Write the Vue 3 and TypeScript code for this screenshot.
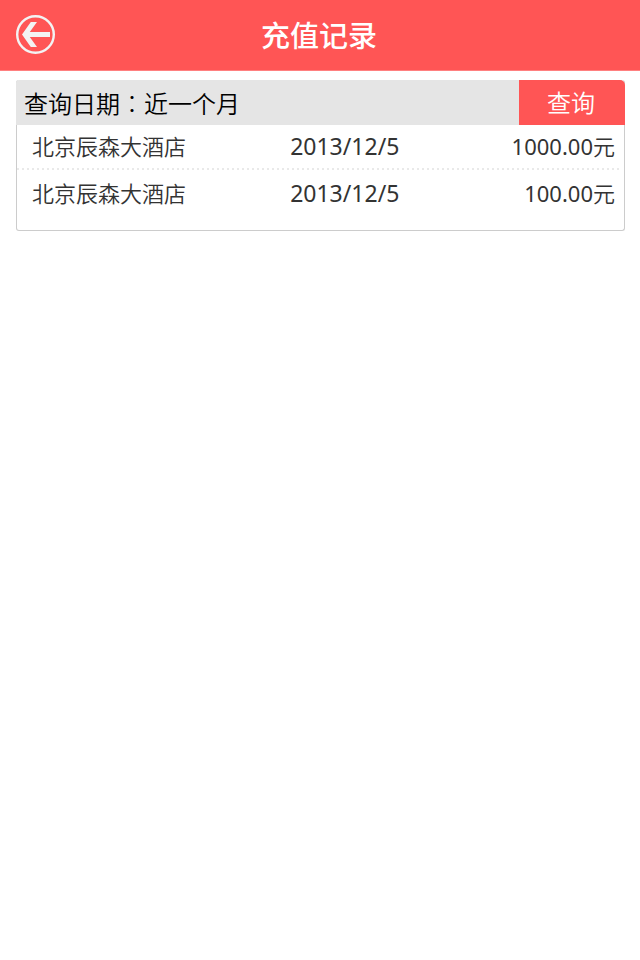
<script setup lang="ts">
import { ref } from 'vue'

interface RechargeRecord {
  id: number
  merchant: string
  date: string
  amount: string
}

const ranges: string[] = ['近一个月']
const range = ref<string>(ranges[0])

const records = ref<RechargeRecord[]>([
  { id: 1, merchant: '北京辰森大酒店', date: '2013/12/5', amount: '1000.00' },
  { id: 2, merchant: '北京辰森大酒店', date: '2013/12/5', amount: '100.00' },
])
</script>

<template>
  <div class="page">
    <header class="bar">
      <button class="back" type="button" aria-label="返回">
        <svg viewBox="0 0 39 39" aria-hidden="true">
          <circle cx="19.5" cy="19.5" r="18.3" fill="none" stroke="currentColor" stroke-width="2.4" />
          <path d="M6 19.5 14.8 7H21L13.8 17H34V22H13.8L21 32H14.8Z" fill="currentColor" />
        </svg>
      </button>
      <h1 class="title">充值记录</h1>
    </header>

    <main class="card">
      <form class="query" @submit.prevent>
        <label class="label" for="range">查询日期<span class="colon">：</span></label>
        <select id="range" v-model="range" class="range">
          <option v-for="r in ranges" :key="r" :value="r">{{ r }}</option>
        </select>
        <button class="submit" type="submit">查询</button>
      </form>
      <table class="records">
        <tbody>
          <tr v-for="r in records" :key="r.id">
            <td class="merchant">{{ r.merchant }}</td>
            <td class="date">{{ r.date }}</td>
            <td class="amount">{{ r.amount }}<span class="unit">元</span></td>
          </tr>
        </tbody>
      </table>
    </main>
  </div>
</template>

<style>
body {
  background: #fff;
}
</style>

<style scoped>
.page {
  font-family: 'Noto Sans', 'Noto Sans CJK SC', sans-serif;
  color: #333;
}

.bar {
  display: grid;
  grid-template-columns: 39px 1fr 41px;
  align-items: center;
  height: 69px;
  padding: 0 16px 1px;
  background: #ff5555;
  border-bottom: 1px solid #ff8080;
}

.back {
  width: 39px;
  height: 39px;
  padding: 0;
  border: 0;
  background: none;
  color: #f3f3f3;
}

.back svg {
  display: block;
  width: 39px;
  height: 39px;
}

.title {
  margin: 0;
  padding-top: 2px;
  font-size: 29px;
  line-height: 43px;
  font-weight: 500;
  text-align: center;
  color: #fff;
}

.card {
  margin: 9px 15px 0 16px;
  padding-bottom: 12px;
  border: 1px solid #ccc;
  border-top: 0;
  border-radius: 3px;
}

.query {
  display: flex;
  align-items: center;
  height: 45px;
  margin: 0 -1px;
  padding-left: 8px;
  border-radius: 3px 5px 0 0;
  overflow: hidden;
  background: #e5e5e5;
  color: #000;
  font-size: 24px;
  font-weight: 350;
}

.label {
  padding-top: 2px;
  line-height: 33px;
}

.colon {
  font-family: 'Noto Sans CJK TC', sans-serif;
  font-weight: 300;
  line-height: 24px;
}

.range {
  flex: 1;
  min-width: 0;
  height: 35px;
  margin: 0;
  padding: 2px 0 0;
  border: 0;
  background: none;
  appearance: none;
  font: inherit;
  color: inherit;
}

.submit {
  align-self: stretch;
  width: 106px;
  padding: 0 2px 2px 0;
  border: 0;
  background: #ff5555;
  color: #fff;
  font: inherit;
}

.records {
  width: 100%;
  border-collapse: collapse;
  table-layout: fixed;
  font-size: 22px;
  font-weight: 350;
}

.records td {
  box-sizing: border-box;
  height: 48px;
  padding: 0 0 2px;
  line-height: 32px;
}

.records tr:first-child td {
  height: 45px;
  padding-bottom: 4px;
}

.records tr:first-child {
  background: repeating-linear-gradient(90deg, #e9e9e9 0 2px, transparent 2px 5px) 0 100% / calc(100% - 4px) 2px no-repeat;
}

.records .merchant {
  width: 45%;
  padding-left: 15px;
}

.date {
  width: 20%;
  font-size: 23px;
  font-weight: 380;
  white-space: nowrap;
}

.records .amount {
  padding-right: 9px;
  font-weight: 380;
  text-align: right;
}

.unit {
  font-weight: 350;
}
</style>
